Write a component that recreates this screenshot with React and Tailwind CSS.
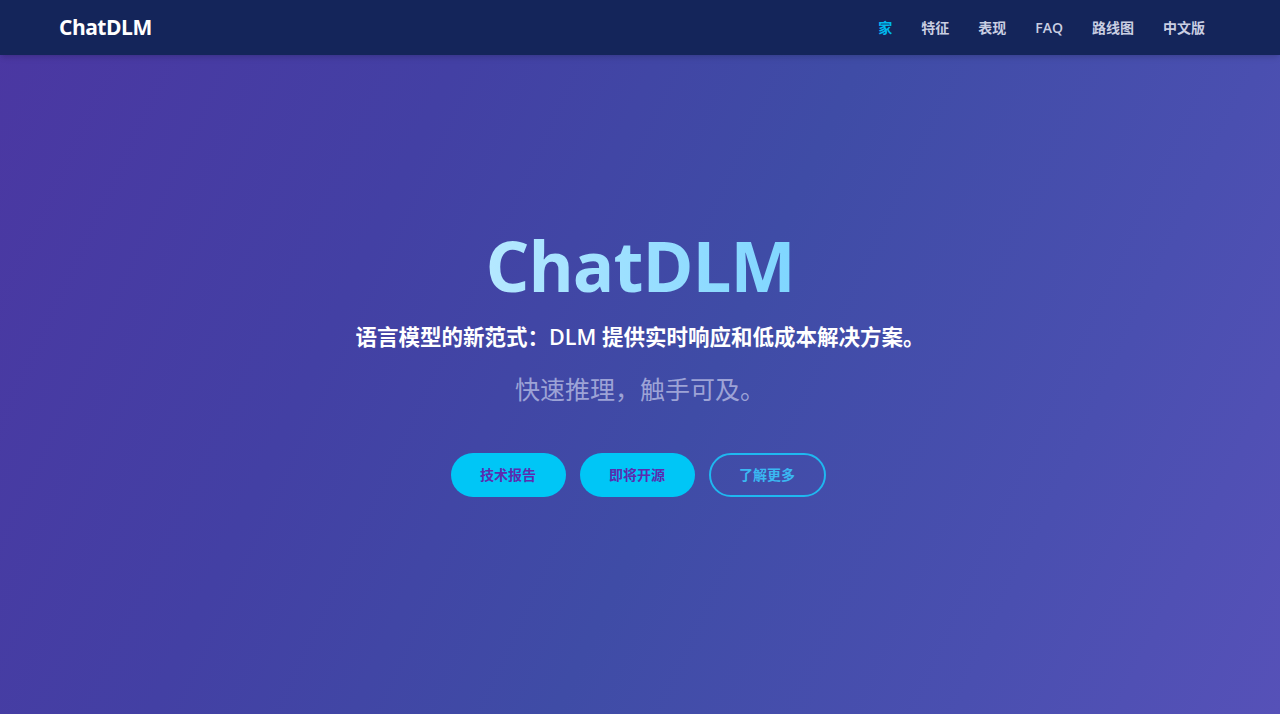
export default function App() {
  const links = ["家", "特征", "表现", "FAQ", "路线图", "中文版"];

  return (
    <div
      className="min-h-[714px] flex flex-col bg-[linear-gradient(115deg,#4b37a2_0%,#4340a4_30%,#3f4ca6_55%,#4a4fb0_80%,#5651b8_100%)]"
      style={{ fontFamily: '"Open Sans", "Noto Sans CJK SC", sans-serif' }}
    >
      <header className="h-[55px] bg-[#14255a] flex items-center justify-between pl-[59px] pr-[75px] shadow-md">
        <div className="text-white text-[21px] font-bold tracking-[-0.5px]">ChatDLM</div>
        <nav className="flex gap-[29px] text-[14px] font-semibold">
          {links.map((l, i) => (
            <a key={l} href="#" className={i === 0 ? "text-[#00b8ee]" : "text-[#c9cee2]"}>
              {l}
            </a>
          ))}
        </nav>
      </header>

      <main className="flex flex-col items-center pt-[166px]">
        <h1 className="text-[69px] leading-[88px] font-bold tracking-[-1px] bg-[linear-gradient(90deg,#b5e8ff,#7fd6ff)] bg-clip-text text-transparent">
          ChatDLM
        </h1>
        <p className="mt-[12px] text-[21.5px] font-semibold text-white">
          语言模型的新范式：DLM 提供实时响应和低成本解决方案。
        </p>
        <p className="mt-[18px] text-[25px] text-[#9da3d6]">快速推理，触手可及。</p>
        <div className="mt-[44px] flex gap-[14px] -translate-x-[2px]">
          <button className="w-[115px] h-[44px] rounded-full bg-[#00c6f6] text-[#5b2db0] text-[14px] font-bold">
            技术报告
          </button>
          <button className="w-[115px] h-[44px] rounded-full bg-[#00c6f6] text-[#5b2db0] text-[14px] font-bold">
            即将开源
          </button>
          <button className="w-[117px] h-[44px] rounded-full border-2 border-[#1fb8f0] text-[#3ab8f2] text-[14px] font-bold">
            了解更多
          </button>
        </div>
      </main>
    </div>
  );
}
